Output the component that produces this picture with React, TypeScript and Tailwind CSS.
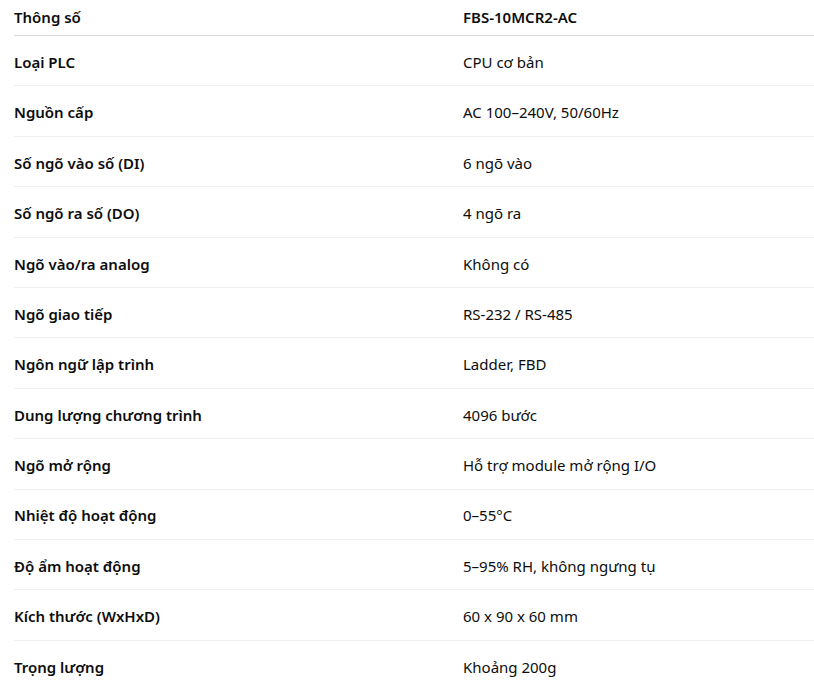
const rows: [string, string][] = [
  ['Loại PLC', 'CPU cơ bản'],
  ['Nguồn cấp', 'AC 100–240V, 50/60Hz'],
  ['Số ngõ vào số (DI)', '6 ngõ vào'],
  ['Số ngõ ra số (DO)', '4 ngõ ra'],
  ['Ngõ vào/ra analog', 'Không có'],
  ['Ngõ giao tiếp', 'RS-232 / RS-485'],
  ['Ngôn ngữ lập trình', 'Ladder, FBD'],
  ['Dung lượng chương trình', '4096 bước'],
  ['Ngõ mở rộng', 'Hỗ trợ module mở rộng I/O'],
  ['Nhiệt độ hoạt động', '0–55°C'],
  ['Độ ẩm hoạt động', '5–95% RH, không ngưng tụ'],
  ['Kích thước (WxHxD)', '60 x 90 x 60 mm'],
  ['Trọng lượng', 'Khoảng 200g'],
]

const App = () => {
  return (
    <div className="min-h-screen bg-white pl-[14px] text-[15px] text-[#0d0d0d] font-['Noto_Sans',sans-serif]">
      <div className="flex h-[36px] items-center border-b border-[#dadada] pb-px font-semibold">
        <div className="w-[449px]">Thông số</div>
        <div>FBS-10MCR2-AC</div>
      </div>
      {rows.map(([k, v]) => (
        <div key={k} className="flex h-[50.4px] items-center border-b border-[#f0f0f0] pt-[3px]">
          <div className="w-[449px] font-semibold">{k}</div>
          <div>{v}</div>
        </div>
      ))}
    </div>
  )
}

export default App
